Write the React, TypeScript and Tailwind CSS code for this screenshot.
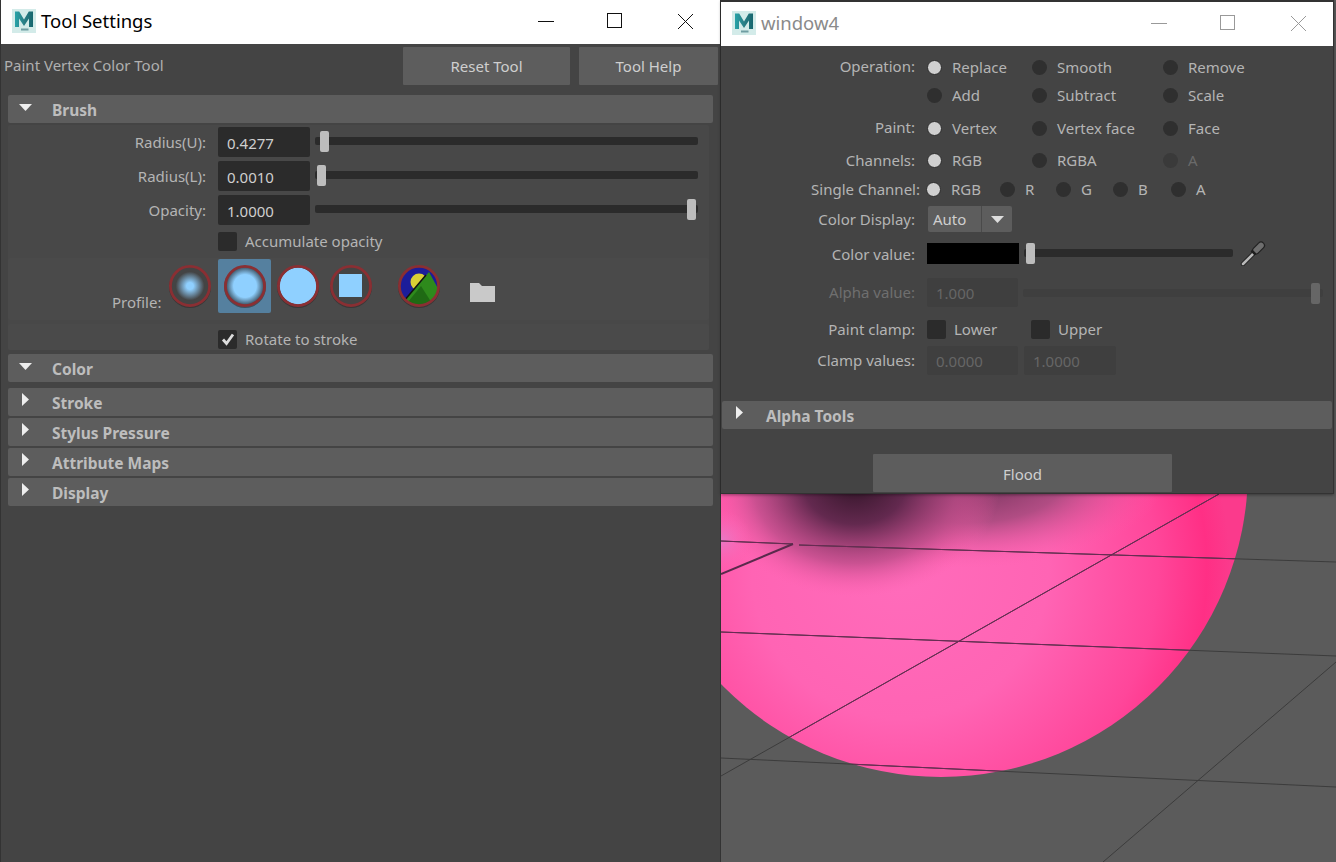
import React from 'react';

const font = 'font-["Noto_Sans","Open_Sans",sans-serif]';

const MayaIcon = ({ dim }: { dim?: boolean }) => (
  <svg width="24" height="24" viewBox="0 0 24 24" className="shrink-0">
    <defs>
      <linearGradient id={dim ? 'mayaB' : 'mayaA'} x1="0" y1="0" x2="1" y2="0">
        <stop offset="0" stopColor="#27a3a8" />
        <stop offset="0.5" stopColor="#2a7f86" />
        <stop offset="1" stopColor="#17666e" />
      </linearGradient>
    </defs>
    <rect width="24" height="24" fill="#d3ebe9" />
    <path d="M3 18V2.500h4.200L12 10.500l4.800-8H21V18h-4V9.500L12 17 7 9.500V18z" fill={`url(#${dim ? 'mayaB' : 'mayaA'})`} />
    <rect x="9" y="19.500" width="7.500" height="2" fill="#6f9da2" />
  </svg>
);

const Triangle = ({ open }: { open: boolean }) =>
  open ? (
    <svg width="13" height="7" viewBox="0 0 13 7" className="absolute left-[11px] top-[9px]">
      <path d="M0 0h13L6.500 7z" fill="#eeeeee" />
    </svg>
  ) : (
    <svg width="7" height="13" viewBox="0 0 7 13" className="absolute left-[14px] top-[5px]">
      <path d="M0 0l7 6.500L0 13z" fill="#eeeeee" />
    </svg>
  );

const Section = ({ title, open, className }: { title: string; open?: boolean; className: string }) => (
  <div className={`relative h-[28px] rounded-[2px] bg-[#5d5d5d] pl-[44px] text-[15.500px] font-bold leading-[30px] text-[#bdbdbd] ${className}`}>
    <Triangle open={!!open} />
    {title}
  </div>
);

const Button = ({ label, className }: { label: string; className: string }) => (
  <div className={`flex h-[38px] items-center justify-center rounded-[1px] bg-[#5d5d5d] pt-[1px] text-[15px] text-[#cfcfcf] ${className}`}>
    {label}
  </div>
);

const Slider = ({ thumb, className, disabled }: { thumb: number; className: string; disabled?: boolean }) => (
  <div className={`relative h-[8px] rounded-[2px] ${disabled ? 'bg-[#3f3f3f]' : 'bg-[#2b2b2b]'} ${className}`}>
    <div
      className={`absolute top-[-6px] h-[21px] w-[9px] rounded-[2px] ${disabled ? 'bg-[#666666]' : 'bg-[#bdbdbd]'}`}
      style={{ left: thumb }}
    />
  </div>
);

const SliderRow = ({ label, value, thumb }: { label: string; value: string; thumb: number }) => (
  <div className="flex h-[30px] items-center">
    <div className="w-[199px] pr-[1px] text-right text-[#b4b4b4]">{label}</div>
    <div className="ml-[11px] flex h-[30px] w-[92px] items-center rounded-[2px] bg-[#2b2b2b] pl-[9px] pt-[2px] text-[#cfcfcf]">{value}</div>
    <Slider thumb={thumb} className="ml-[5px] w-[383px] -translate-y-[1px]" />
  </div>
);

const Checkbox = ({ checked }: { checked?: boolean }) => (
  <div className="flex h-[19px] w-[19px] shrink-0 items-center justify-center rounded-[2px] bg-[#2b2b2b]">
    {checked && (
      <svg width="14" height="14" viewBox="0 0 14 14">
        <path d="M2 7.500l3.500 4L12 2.500" fill="none" stroke="#dddddd" strokeWidth="2.800" />
      </svg>
    )}
  </div>
);

const ProfileIcon = ({ children, selected, className }: { children: React.ReactNode; selected?: boolean; className?: string }) => (
  <div className={`flex h-[54px] w-[53px] items-center justify-center rounded-[2px] ${selected ? 'bg-[#55809f]' : ''} ${className ?? ''}`}>
    <svg width="44" height="44" viewBox="0 0 44 44">
      <circle cx="22" cy="23" r="21" fill="#2a2a2a" opacity="0.55" />
      {children}
      <circle cx="22" cy="22" r="19.600" fill="none" stroke="#8a2f33" strokeWidth="2.800" />
    </svg>
  </div>
);

const Radio = ({ on, dim }: { on?: boolean; dim?: boolean }) => (
  <div className={`h-[15px] w-[15px] shrink-0 rounded-full ${on ? 'border border-[#2b2b2b] bg-[#cfcfcf]' : dim ? 'bg-[#3a3a3a]' : 'bg-[#2f2f2f]'}`} />
);

const RadioItem = ({ label, on, dim, width, gap = 10 }: { label: string; on?: boolean; dim?: boolean; width: string; gap?: number }) => (
  <div className={`flex items-center ${width}`}>
    <Radio on={on} dim={dim} />
    <span className={dim ? 'text-[#6a6a6a]' : 'text-[#b4b4b4]'} style={{ marginLeft: gap }}>
      {label}
    </span>
  </div>
);

const Row = ({ label, className, labelClassName, dim, children }: { label?: string; className?: string; labelClassName?: string; dim?: boolean; children: React.ReactNode }) => (
  <div className={`flex items-center ${className ?? ''}`}>
    <div className={`w-[194px] shrink-0 text-right ${dim ? 'text-[#6f6f6f]' : 'text-[#b4b4b4]'} ${labelClassName ?? ''}`}>{label}</div>
    <div className="ml-[12px] flex items-center">{children}</div>
  </div>
);

const Faded = ({ value, className }: { value: string; className: string }) => (
  <div className={`flex h-[29px] items-center rounded-[2px] bg-[#3f3f3f] pl-[9px] pt-[1px] text-[#666666] ${className}`}>{value}</div>
);

const gridLines = [
  'M721 541L793 544M799 545L1336 562',
  'M721 632L1336 656',
  'M721 758L1336 787',
  'M1219 494L721 776',
  'M1336 662L1103 862',
];

const Viewport = () => (
  <svg width="615" height="862" viewBox="721 0 615 862" className="absolute left-0 top-0">
    <defs>
      <radialGradient id="ball" gradientUnits="userSpaceOnUse" cx="900" cy="570" r="330">
        <stop offset="0" stopColor="#ff6cbb" />
        <stop offset="0.45" stopColor="#ff64b4" />
        <stop offset="0.78" stopColor="#ff469a" />
        <stop offset="0.93" stopColor="#ff2f85" />
        <stop offset="1" stopColor="#fb3a8c" />
      </radialGradient>
      <radialGradient id="burn" gradientUnits="userSpaceOnUse" cx="0" cy="0" r="1" gradientTransform="translate(855 485) scale(145 112)">
        <stop offset="0" stopColor="#35162a" />
        <stop offset="0.35" stopColor="#63294f" />
        <stop offset="0.7" stopColor="#b84a85" stopOpacity="0.75" />
        <stop offset="1" stopColor="#ff5fac" stopOpacity="0" />
      </radialGradient>
      <radialGradient id="burn2" gradientUnits="userSpaceOnUse" cx="0" cy="0" r="1" gradientTransform="translate(965 478) scale(200 90)">
        <stop offset="0" stopColor="#6a2f55" />
        <stop offset="0.5" stopColor="#a84a7e" stopOpacity="0.9" />
        <stop offset="1" stopColor="#ff5fac" stopOpacity="0" />
      </radialGradient>
      <radialGradient id="glow" gradientUnits="userSpaceOnUse" cx="722" cy="540" r="30">
        <stop offset="0" stopColor="#e878c4" />
        <stop offset="1" stopColor="#ff66b4" stopOpacity="0" />
      </radialGradient>
      <clipPath id="ballClip">
        <circle cx="941" cy="470" r="307" />
      </clipPath>
    </defs>
    <rect x="721" y="0" width="615" height="862" fill="#5b5b5b" />
    <circle cx="941" cy="470" r="307" fill="url(#ball)" />
    <g clipPath="url(#ballClip)">
      <rect x="721" y="380" width="615" height="200" fill="url(#burn2)" />
      <rect x="721" y="370" width="400" height="240" fill="url(#burn)" />
      <rect x="721" y="500" width="40" height="90" fill="url(#glow)" />
    </g>
    <g stroke="#3c3c3c" fill="none">
      {gridLines.map(d => <path key={d} d={d} />)}
    </g>
    <g stroke="#6b2a55" fill="none" clipPath="url(#ballClip)">
      {gridLines.map(d => <path key={d} d={d} />)}
    </g>
    <path d="M793 544L721 574" stroke="#5a2a4c" strokeWidth="2" />
  </svg>
);

export default function App() {
  return (
    <div className={`flex h-[862px] w-[1336px] overflow-hidden bg-[#444444] text-[15px] ${font}`}>
      {/* Tool Settings */}
      <div className="h-full w-[721px] shrink-0 border-x border-[#333333] bg-[#444444]">
        <div className="flex h-[44px] items-center bg-white pb-[2px] pl-[11px]">
          <MayaIcon />
          <span className="ml-[5px] text-[18.500px] text-black">Tool Settings</span>
          <div className="ml-auto flex items-center pr-[26px]">
            <svg width="18" height="18" viewBox="0 0 18 18"><path d="M1 9.500h16" stroke="#111" /></svg>
            <svg width="16" height="16" viewBox="0 0 16 16" className="ml-[52px]"><rect x="0.500" y="0.500" width="14" height="14" fill="none" stroke="#111" /></svg>
            <svg width="17" height="17" viewBox="0 0 17 17" className="ml-[54px]"><path d="M1 1l15 15M16 1L1 16" stroke="#111" /></svg>
          </div>
        </div>

        <div className="mt-[3px] flex items-start">
          <div className="ml-[3px] mt-[7px] text-[#b0b0b0]">Paint Vertex Color Tool</div>
          <Button label="Reset Tool" className="ml-auto w-[167px]" />
          <Button label="Tool Help" className="ml-[9px] mr-[2px] w-[139px]" />
        </div>

        <Section title="Brush" open className="ml-[7px] mt-[10px] w-[705px]" />

        <div className="ml-[7px] mt-[2px] w-[701px] rounded-[2px] bg-[#484848] pt-[2px]">
          <div className="flex flex-col gap-[4px]">
            <SliderRow label="Radius(U):" value="0.4277" thumb={5} />
            <SliderRow label="Radius(L):" value="0.0010" thumb={2} />
            <SliderRow label="Opacity:" value="1.0000" thumb={372} />
          </div>
          <div className="ml-[210px] mt-[7px] flex h-[19px] items-center">
            <Checkbox />
            <span className="ml-[8px] text-[#b4b4b4]">Accumulate opacity</span>
          </div>
          <div className="mt-[7px] flex h-[62px] items-center rounded-[2px] bg-[#4a4a4a]">
            <span className="ml-[98px] mt-[26px] w-[113px] pl-[6px] text-[#b4b4b4]">Profile:</span>
            <div className="-ml-[56px] -mt-[6px] flex items-center">
              <ProfileIcon className="mr-[2px]">
                <defs>
                  <radialGradient id="p1">
                    <stop offset="0" stopColor="#8fd0ff" />
                    <stop offset="0.18" stopColor="#8fd0ff" />
                    <stop offset="0.75" stopColor="#444444" />
                    <stop offset="1" stopColor="#444444" />
                  </radialGradient>
                </defs>
                <circle cx="22" cy="22" r="19" fill="url(#p1)" />
              </ProfileIcon>
              <ProfileIcon selected>
                <defs>
                  <radialGradient id="p2">
                    <stop offset="0" stopColor="#8fd0ff" />
                    <stop offset="0.6" stopColor="#8fd0ff" />
                    <stop offset="1" stopColor="#3c5364" />
                  </radialGradient>
                </defs>
                <circle cx="22" cy="22" r="19" fill="url(#p2)" />
              </ProfileIcon>
              <ProfileIcon>
                <circle cx="22" cy="22" r="18.500" fill="#8fd0ff" />
              </ProfileIcon>
              <ProfileIcon>
                <circle cx="22" cy="22" r="19" fill="#444444" />
                <rect x="10" y="10" width="23" height="23" fill="#8fd0ff" />
              </ProfileIcon>
              <ProfileIcon className="ml-[15px]">
                <clipPath id="p5"><circle cx="22" cy="22" r="19" /></clipPath>
                <g clipPath="url(#p5)">
                  <rect x="0" y="0" width="44" height="44" fill="#1c1d9a" />
                  <circle cx="22" cy="18" r="8.500" fill="#d9cf35" />
                  <path d="M0 44L32 8l12 22v14z" fill="#2e8a1c" />
                  <path d="M6 44L24 22l14 22z" fill="#1f6a14" />
                  <path d="M7 37L29 11" stroke="#111" strokeWidth="1.500" />
                </g>
              </ProfileIcon>
              <svg width="25" height="21" viewBox="0 0 25 21" className="ml-[25px] mt-[12px]">
                <path d="M0 20V1h9l3 3h13v16z" fill="#c9c9c9" />
              </svg>
            </div>
          </div>
          <div className="mt-[4px] flex h-[26px] items-center rounded-[2px] bg-[#4a4a4a] pl-[210px] pt-[4px]">
            <Checkbox checked />
            <span className="ml-[8px] text-[#b4b4b4]">Rotate to stroke</span>
          </div>
        </div>

        <Section title="Color" open className="ml-[7px] mt-[4px] w-[705px]" />
        <Section title="Stroke" className="ml-[7px] mt-[6px] w-[705px]" />
        <Section title="Stylus Pressure" className="ml-[7px] mt-[2px] w-[705px]" />
        <Section title="Attribute Maps" className="ml-[7px] mt-[2px] w-[705px]" />
        <Section title="Display" className="ml-[7px] mt-[2px] w-[705px]" />
      </div>

      {/* Viewport and floating window */}
      <div className="relative h-full w-[615px]">
        <Viewport />
        <div className="absolute left-0 top-0 h-[494px] w-[613px] border-t-2 border-r border-b border-[#333333] bg-[#444444] shadow-[0_1px_3px_rgba(0,0,0,0.4)]">
          <div className="flex h-[44px] items-center bg-white pb-[2px] pl-[11px]">
            <MayaIcon dim />
            <span className="ml-[5px] text-[18.500px] text-[#8a8a8a]">window4</span>
            <div className="ml-auto flex items-center pr-[26px]">
              <svg width="18" height="18" viewBox="0 0 18 18"><path d="M1 9.500h16" stroke="#999" /></svg>
              <svg width="16" height="16" viewBox="0 0 16 16" className="ml-[52px]"><rect x="0.500" y="0.500" width="14" height="14" fill="none" stroke="#999" /></svg>
              <svg width="17" height="17" viewBox="0 0 17 17" className="ml-[54px]"><path d="M1 1l15 15M16 1L1 16" stroke="#999" /></svg>
            </div>
          </div>

          <Row label="Operation:" className="mt-[10px] h-[22px]" labelClassName="-translate-y-[1px]">
            <RadioItem label="Replace" on width="w-[105px]" />
            <RadioItem label="Smooth" width="w-[131px]" />
            <RadioItem label="Remove" width="w-[100px]" />
          </Row>
          <Row className="mt-[6px] h-[22px]">
            <RadioItem label="Add" width="w-[105px]" />
            <RadioItem label="Subtract" width="w-[131px]" />
            <RadioItem label="Scale" width="w-[100px]" />
          </Row>
          <Row label="Paint:" className="mt-[11px] h-[22px]" labelClassName="-translate-y-[1px]">
            <RadioItem label="Vertex" on width="w-[105px]" />
            <RadioItem label="Vertex face" width="w-[131px]" />
            <RadioItem label="Face" width="w-[100px]" />
          </Row>
          <Row label="Channels:" className="mt-[10px] h-[22px]">
            <RadioItem label="RGB" on width="w-[105px]" />
            <RadioItem label="RGBA" width="w-[131px]" />
            <RadioItem label="A" dim width="w-[100px]" />
          </Row>
          <div className="mt-[7px] flex h-[22px] items-center">
            <div className="w-[199px] shrink-0 text-right text-[#b4b4b4]">Single Channel:</div>
            <div className="ml-[6px] flex items-center">
              <RadioItem label="RGB" on width="w-[74px]" />
              <RadioItem label="R" width="w-[56px]" />
              <RadioItem label="G" width="w-[57px]" />
              <RadioItem label="B" width="w-[58px]" />
              <RadioItem label="A" width="w-[50px]" />
            </div>
          </div>
          <Row label="Color Display:" className="mt-[6px] h-[26px]">
            <div className="ml-[1px] flex h-[26px] w-[84px] rounded-[2px] bg-[#5d5d5d] text-[#cfcfcf]">
              <div className="flex w-[54px] items-center border-r border-[#4a4a4a] pl-[5px] pt-[1px]">Auto</div>
              <div className="flex flex-1 items-center justify-center">
                <svg width="13" height="7" viewBox="0 0 13 7"><path d="M0 0h13L6.500 7z" fill="#dddddd" /></svg>
              </div>
            </div>
          </Row>
          <Row label="Color value:" className="mt-[9px] h-[24px]" labelClassName="translate-y-[1px]">
            <div className="h-[21px] w-[92px] bg-black" />
            <Slider thumb={2} className="ml-[5px] w-[209px]" />
            <svg width="26" height="26" viewBox="0 0 26 26" className="ml-[7px]">
              <path d="M3 24L14 13" stroke="#222222" strokeWidth="4.500" strokeLinecap="round" />
              <path d="M3 24L14 13" stroke="#b8b8b8" strokeWidth="2.500" strokeLinecap="round" />
              <path d="M16 10.500L21 5.500" stroke="#222222" strokeWidth="8" strokeLinecap="round" />
              <path d="M16 10.500L21 5.500" stroke="#6e6e6e" strokeWidth="5.500" strokeLinecap="round" />
              <path d="M11.500 10.500l4 4" stroke="#1f1f1f" strokeWidth="2.500" />
            </svg>
          </Row>
          <Row label="Alpha value:" dim className="mt-[13px] h-[29px]">
            <Faded value="1.000" className="w-[91px]" />
            <Slider thumb={288} disabled className="ml-[5px] w-[300px]" />
          </Row>
          <Row label="Paint clamp:" className="mt-[13px] h-[19px]">
            <Checkbox />
            <span className="ml-[8px] w-[77px] text-[#b4b4b4]">Lower</span>
            <Checkbox />
            <span className="ml-[8px] text-[#b4b4b4]">Upper</span>
          </Row>
          <Row label="Clamp values:" className="mt-[7px] h-[29px]">
            <Faded value="0.0000" className="w-[91px]" />
            <Faded value="1.0000" className="ml-[6px] w-[92px]" />
          </Row>

          <Section title="Alpha Tools" className="mx-px mt-[26px]" />
          <div className="ml-[152px] mt-[25px] flex h-[38px] w-[299px] items-center justify-center rounded-[1px] bg-[#5d5d5d] pt-[2px] text-[#cfcfcf]">Flood</div>
        </div>
      </div>
    </div>
  );
}
